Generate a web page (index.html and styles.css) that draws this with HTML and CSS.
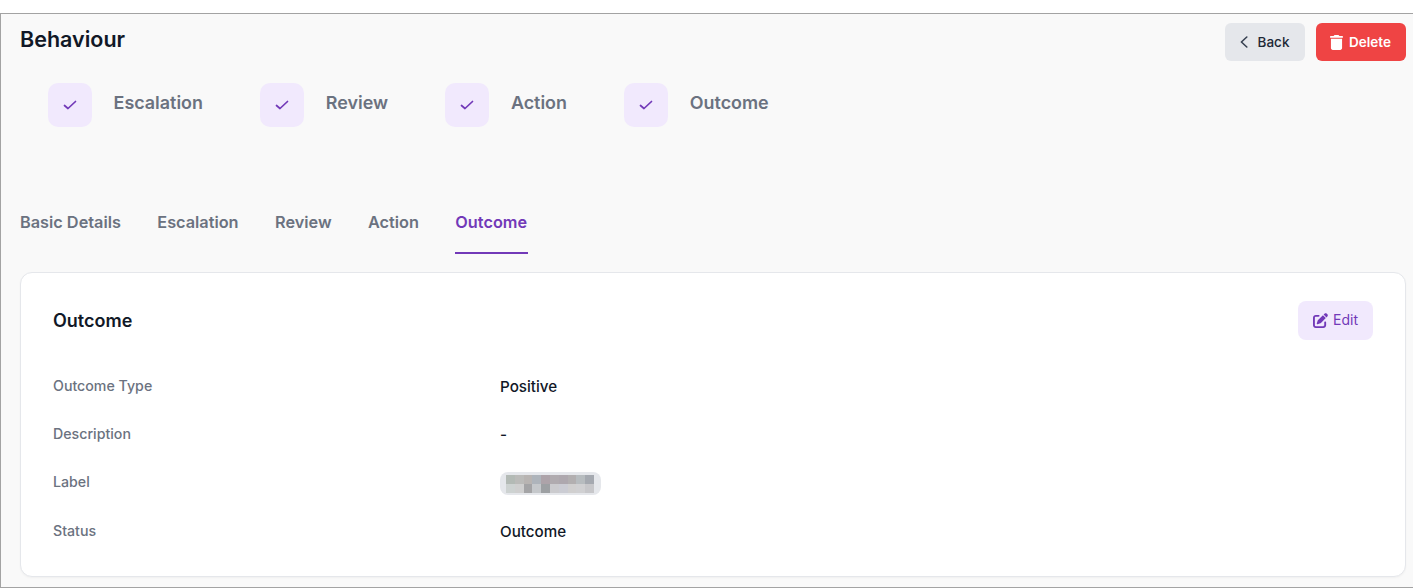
FILE: index.html
```html
<!DOCTYPE html>
<html lang="en">
<head>
<meta charset="utf-8">
<title>Behaviour</title>
<link rel="stylesheet" href="styles.css">
</head>
<body>
<main class="frame">
  <header class="top">
    <h1 class="title">Behaviour</h1>
    <div class="actions">
      <button class="btn btn-back">
        <svg class="ico-back" viewBox="0 0 8 12" fill="none" stroke="currentColor" stroke-width="1.600" stroke-linecap="round" stroke-linejoin="round"><path d="M6.800 1 1.400 6l5.400 5"/></svg>
        Back
      </button>
      <button class="btn btn-delete">
        <svg class="ico-trash" viewBox="0 0 448 512" fill="currentColor"><path d="M135 17.700C140.400 6.800 151.500 0 163.600 0h120.800c12.100 0 23.200 6.800 28.600 17.700L320 32h96c17.700 0 32 14.300 32 32s-14.300 32-32 32H32C14.300 96 0 81.700 0 64s14.300-32 32-32h96l7-14.300zM32 128h384v320c0 35.300-28.700 64-64 64H96c-35.300 0-64-28.700-64-64V128z"/></svg>
        Delete
      </button>
    </div>
  </header>

  <ol class="steps">
    <li class="step"><span class="step-box"><svg class="ico-check" viewBox="0 0 14 14" fill="none" stroke="currentColor" stroke-width="1.700" stroke-linecap="round" stroke-linejoin="round"><path d="M1.500 7.500 5 10.500 12.500 3.500"/></svg></span>Escalation</li>
    <li class="step"><span class="step-box"><svg class="ico-check" viewBox="0 0 14 14" fill="none" stroke="currentColor" stroke-width="1.700" stroke-linecap="round" stroke-linejoin="round"><path d="M1.500 7.500 5 10.500 12.500 3.500"/></svg></span>Review</li>
    <li class="step"><span class="step-box"><svg class="ico-check" viewBox="0 0 14 14" fill="none" stroke="currentColor" stroke-width="1.700" stroke-linecap="round" stroke-linejoin="round"><path d="M1.500 7.500 5 10.500 12.500 3.500"/></svg></span>Action</li>
    <li class="step"><span class="step-box"><svg class="ico-check" viewBox="0 0 14 14" fill="none" stroke="currentColor" stroke-width="1.700" stroke-linecap="round" stroke-linejoin="round"><path d="M1.500 7.500 5 10.500 12.500 3.500"/></svg></span>Outcome</li>
  </ol>

  <nav class="tabs">
    <a class="tab">Basic Details</a>
    <a class="tab">Escalation</a>
    <a class="tab">Review</a>
    <a class="tab">Action</a>
    <a class="tab tab-active">Outcome</a>
  </nav>

  <section class="card">
    <div class="card-head">
      <h2 class="card-title">Outcome</h2>
      <button class="btn-edit">
        <svg class="ico-edit" viewBox="0 0 512 512" fill="currentColor"><path d="M471.600 21.700c-21.900-21.900-57.300-21.900-79.200 0L362.300 51.700l97.900 97.900 30.100-30.100c21.900-21.900 21.900-57.300 0-79.200L471.600 21.700zM172.400 241.700c-6.100 6.100-10.800 13.600-13.500 21.900l-29.600 88.800c-2.900 8.600-.6 18.100 5.800 24.600s15.900 8.700 24.600 5.800l88.800-29.600c8.200-2.700 15.700-7.400 21.900-13.500L437.700 172.300 339.700 74.300 172.400 241.700zM96 64C43 64 0 107 0 160V416c0 53 43 96 96 96H352c53 0 96-43 96-96V320c0-17.700-14.300-32-32-32s-32 14.300-32 32v96c0 17.700-14.300 32-32 32H96c-17.700 0-32-14.300-32-32V160c0-17.700 14.300-32 32-32h96c17.700 0 32-14.300 32-32s-14.300-32-32-32H96z"/></svg>
        <span class="edit-text">Edit</span>
      </button>
    </div>
    <dl class="details">
      <dt>Outcome Type</dt><dd>Positive</dd>
      <dt>Description</dt><dd>-</dd>
      <dt>Label</dt>
      <dd class="dd-pill">
        <span class="pill">
          <svg class="redacted" viewBox="0 0 10 2" shape-rendering="crispEdges">
            <rect x="0" y="0" width="1" height="1" fill="#b3bab5"/><rect x="1" y="0" width="1" height="1" fill="#bbbbb9"/><rect x="2" y="0" width="1" height="1" fill="#b8b4b2"/><rect x="3" y="0" width="1" height="1" fill="#aeb4bb"/><rect x="4" y="0" width="1" height="1" fill="#ada3a9"/><rect x="5" y="0" width="1" height="1" fill="#b0abaf"/><rect x="6" y="0" width="1" height="1" fill="#aea8ae"/><rect x="7" y="0" width="1" height="1" fill="#b2afb0"/><rect x="8" y="0" width="1" height="1" fill="#b7bcbf"/><rect x="9" y="0" width="1" height="1" fill="#a5a9b0"/>
            <rect x="0" y="1" width="1" height="1" fill="#cdd2d1"/><rect x="1" y="1" width="1" height="1" fill="#cfcfcf"/><rect x="2" y="1" width="1" height="1" fill="#a4a4a6"/><rect x="3" y="1" width="1" height="1" fill="#c5c8cb"/><rect x="4" y="1" width="1" height="1" fill="#9da0a3"/><rect x="5" y="1" width="1" height="1" fill="#cbcbce"/><rect x="6" y="1" width="1" height="1" fill="#cbccd3"/><rect x="7" y="1" width="1" height="1" fill="#d0cfcf"/><rect x="8" y="1" width="1" height="1" fill="#d0d0d2"/><rect x="9" y="1" width="1" height="1" fill="#c7c7ca"/>
          </svg>
        </span>
      </dd>
      <dt>Status</dt><dd>Outcome</dd>
    </dl>
  </section>
</main>
</body>
</html>
```
FILE: styles.css
```css
* { box-sizing: border-box; }
html, body { margin: 0; padding: 0; }
body {
  background: #fff;
  font-family: Inter, "Liberation Sans", sans-serif;
  color: #111827;
  height: 588px;
  overflow: hidden;
  padding-top: 13px;
}
.frame {
  height: 575px;
  background: #f9f9f9;
  border-top: 1px solid #a3a3a3;
  border-left: 1px solid #a3a3a3;
  border-bottom: 1px solid #a3a3a3;
  padding: 0 7px 0 19px;
  display: flex;
  flex-direction: column;
}
.top {
  display: flex;
  justify-content: space-between;
  align-items: flex-start;
  padding-top: 9px;
  height: 69px;
}
.title {
  margin: 0;
  font-size: 21.500px;
  line-height: 32px;
  font-weight: 600;
  color: #111827;
}
.actions { display: flex; gap: 11px; }
.btn {
  height: 38px;
  border: 0;
  border-radius: 6px;
  font: 500 13.500px/20px Inter, sans-serif;
  display: inline-flex;
  align-items: center;
  justify-content: center;
  padding: 0;
}
.btn-back { width: 80px; background: #e5e7eb; color: #1f2937; gap: 10px; padding-right: 1px; }
.btn-delete { width: 90px; background: #ef4444; color: #fff; gap: 6px; padding-right: 1px; font-weight: 600; }
.ico-back { width: 8px; height: 12px; color: #374151; }
.ico-trash { width: 13px; height: 15px; }
.steps {
  list-style: none;
  margin: 0;
  padding: 0 0 0 28px;
  display: flex;
  gap: 57.300px;
}
.step {
  display: flex;
  align-items: flex-start;
  gap: 21.600px;
  font-size: 17.900px;
  font-weight: 600;
  color: #6b7280;
  line-height: 40px;
  height: 44px;
}
.step-box {
  width: 44px;
  height: 44px;
  border-radius: 10px;
  background: #f1e9fd;
  display: flex;
  align-items: center;
  justify-content: center;
  color: #7239b8;
}
.ico-check { width: 14px; height: 14px; }
.tabs {
  margin-top: 76px;
  display: flex;
  gap: 36.400px;
  height: 51px;
}
.tab {
  font-size: 16.300px;
  font-weight: 600;
  line-height: 24px;
  color: #6b7280;
  padding-top: 7px;
  height: 50px;
}
.tab-active {
  color: #7239b8;
  border-bottom: 2px solid #7239b8;
  padding-right: 1px;
  height: 51px;
}
.card {
  margin-top: 18px;
  height: 305px;
  background: #fff;
  border: 1px solid #e5e7eb;
  border-radius: 12px;
  padding: 28px 32px 0;
  box-shadow: 0 1px 2px rgba(0,0,0,.04);
}
.card-head {
  display: flex;
  justify-content: space-between;
  align-items: center;
  height: 39px;
}
.card-title {
  margin: 0;
  font-size: 18px;
  font-weight: 600;
  color: #111827;
}
.btn-edit {
  width: 75px;
  height: 39px;
  border: 0;
  border-radius: 8px;
  background: #f1e9fd;
  color: #7239b8;
  font: 400 14px/20px Inter, sans-serif;
  display: inline-flex;
  align-items: center;
  justify-content: center;
  gap: 5px;
  padding: 0;
}
.edit-text { padding-bottom: 2px; }
.ico-edit { width: 15px; height: 15px; }
.details {
  margin: 22px 0 0;
  display: grid;
  grid-template-columns: 447px 1fr;
  grid-auto-rows: 48.300px;
  align-items: center;
}
.details dt { font-size: 14.200px; font-weight: 500; color: #6b7280; padding-bottom: 2px; }
.details dd { margin: 0; font-size: 15.200px; font-weight: 500; color: #111827; }
.details .dd-pill { display: flex; padding-top: 2px; }
.pill {
  display: flex;
  align-items: center;
  justify-content: center;
  width: 101px;
  height: 23px;
  border-radius: 8px;
  background: #e5e7eb;
  padding-right: 1px;
}
.redacted { width: 88px; height: 18px; display: block; }
```
